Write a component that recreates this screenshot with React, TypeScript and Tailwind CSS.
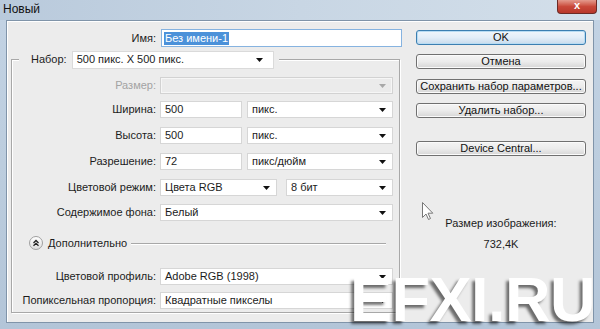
import React from "react";

function Arrow({ disabled }: { disabled?: boolean }) {
  return (
    <svg width="7" height="4" viewBox="0 0 7 4" className="shrink-0">
      <path d="M0 0H7L3.5 4Z" fill={disabled ? "#a8a8a8" : "#111"} />
    </svg>
  );
}

function Btn({ children, def }: { children: React.ReactNode; def?: boolean }) {
  return (
    <div
      className={
        def
          ? "h-[15px] w-[170px] rounded-[3px] border border-[#3c7fb1] bg-gradient-to-b from-[#f0f6fb] via-[#e3eef8] to-[#c8dbec] shadow-[inset_0_0_0_1px_#b8dcf3] flex items-center justify-center text-[11px] leading-none text-[#111]"
          : "h-[15px] w-[170px] rounded-[3px] border border-[#707070] bg-gradient-to-b from-[#f4f4f4] via-[#ececec] to-[#d6d6d6] shadow-[inset_0_0_0_1px_#fbfbfb] flex items-center justify-center text-[11px] leading-none text-[#111]"
      }
    >
      {children}
    </div>
  );
}

export default function App() {
  return (
    <div className="relative w-[600px] h-[329px] overflow-hidden font-['Liberation_Sans',Arial,sans-serif] text-[11px] text-[#1c1c1c] bg-gradient-to-b from-[#c3d3e4] via-[#bccdde] to-[#b3c5d8]">
      {/* title bar */}
      <div className="relative h-[20px] flex items-center pl-[3px] bg-gradient-to-r from-[#b9cadc] via-[#c8d6e4] to-[#d3dfea]">
        <span className="text-[12px] text-[#111] -mt-[3px]">Новый</span>
        <div className="absolute right-[3px] top-0 w-[40px] h-[14px] rounded-b-[4px] border border-t-0 border-[#6b2a25] bg-gradient-to-b from-[#e39a8d] via-[#c9493a] to-[#b8372a] flex items-center justify-center">
          <span className="text-white text-[11px] font-bold leading-none -mt-[2px]">x</span>
        </div>
      </div>
      {/* client */}
      <div className="mx-[6px] h-[303px] border border-[#8094a9] bg-[#ececec]">
        <div className="h-full border-t border-l border-white flex">
          {/* left column */}
          <div className="ml-[3px] w-[391px] flex flex-col">
            <div className="mt-[7px] h-[18px] flex items-center">
              <div className="w-[145px] text-right">Имя:</div>
              <div className="ml-[5px] w-[241px] h-[18px] border border-[#86b3e0] bg-white flex items-center pl-[2px]">
                <span className="bg-[#4b91d9] text-white px-[1px] leading-[13px]">Без имени-1</span>
              </div>
            </div>
            {/* group */}
            <div className="mt-[12px] w-[389px] h-[254px] border border-[#a8a8a8] shadow-[inset_1px_1px_0_#ffffff,1px_1px_0_#ffffff] flex flex-col">
              <div className="-mt-[10px] ml-[7px] self-start bg-[#ececec] pl-[12px] pr-[5px] h-[19px] flex items-center">
                <span>Набор:</span>
                <div className="ml-[5px] w-[202px] h-[18px] bg-white border border-[#dadada] flex items-center justify-between pl-[4px] pr-[10px]">
                  <span>500 пикс. X 500 пикс.</span>
                  <Arrow />
                </div>
              </div>
              <div className="mt-[8px] h-[17px] flex items-center">
                <div className="w-[144px] text-right text-[#a3a3a3]">Размер:</div>
                <div className="ml-[4px] w-[233px] h-[17px] bg-[#ebebeb] border border-[#d2d2d2] shadow-[inset_0_0_0_1px_#f6f6f6] flex items-center justify-end pr-[6px]">
                  <Arrow disabled />
                </div>
              </div>
              <div className="mt-[7px] h-[17px] flex items-center">
                <div className="w-[144px] text-right">Ширина:</div>
                <div className="ml-[4px] w-[82px] h-[17px] bg-white border border-[#d6d6d6] flex items-center pl-[4px]">500</div>
                <div className="ml-[5px] w-[146px] h-[17px] bg-white border border-[#d6d6d6] flex items-center justify-between pl-[4px] pr-[6px]">
                  <span>пикс.</span>
                  <Arrow />
                </div>
              </div>
              <div className="mt-[9px] h-[17px] flex items-center">
                <div className="w-[144px] text-right">Высота:</div>
                <div className="ml-[4px] w-[82px] h-[17px] bg-white border border-[#d6d6d6] flex items-center pl-[4px]">500</div>
                <div className="ml-[5px] w-[146px] h-[17px] bg-white border border-[#d6d6d6] flex items-center justify-between pl-[4px] pr-[6px]">
                  <span>пикс.</span>
                  <Arrow />
                </div>
              </div>
              <div className="mt-[9px] h-[17px] flex items-center">
                <div className="w-[144px] text-right">Разрешение:</div>
                <div className="ml-[4px] w-[82px] h-[17px] bg-white border border-[#d6d6d6] flex items-center pl-[4px]">72</div>
                <div className="ml-[5px] w-[146px] h-[17px] bg-white border border-[#d6d6d6] flex items-center justify-between pl-[4px] pr-[6px]">
                  <span>пикс/дюйм</span>
                  <Arrow />
                </div>
              </div>
              <div className="mt-[9px] h-[17px] flex items-center">
                <div className="w-[144px] text-right">Цветовой режим:</div>
                <div className="ml-[4px] w-[117px] h-[17px] bg-white border border-[#d6d6d6] flex items-center justify-between pl-[4px] pr-[6px]">
                  <span>Цвета RGB</span>
                  <Arrow />
                </div>
                <div className="ml-[9px] w-[107px] h-[17px] bg-white border border-[#d6d6d6] flex items-center justify-between pl-[4px] pr-[6px]">
                  <span>8 бит</span>
                  <Arrow />
                </div>
              </div>
              <div className="mt-[8px] h-[17px] flex items-center">
                <div className="w-[144px] text-right">Содержимое фона:</div>
                <div className="ml-[4px] w-[233px] h-[17px] bg-white border border-[#d6d6d6] flex items-center justify-between pl-[4px] pr-[6px]">
                  <span>Белый</span>
                  <Arrow />
                </div>
              </div>
              <div className="mt-[15px] h-[14px] flex items-center">
                <div className="ml-[17px] w-[14px] h-[14px] rounded-full border border-[#a0a0a0] bg-gradient-to-b from-white to-[#dedede] flex items-center justify-center">
                  <svg width="8" height="8" viewBox="0 0 8 8">
                    <path d="M1.5 4L4 1.5L6.5 4M1.5 6.8L4 4.3L6.5 6.8" fill="none" stroke="#222" strokeWidth="1.3" />
                  </svg>
                </div>
                <span className="ml-[5px]">Дополнительно</span>
                <div className="ml-[4px] mr-[13px] flex-1 h-px bg-[#a8a8a8] shadow-[0_1px_0_#ffffff]" />
              </div>
              <div className="mt-[18px] h-[17px] flex items-center">
                <div className="w-[144px] text-right">Цветовой профиль:</div>
                <div className="ml-[4px] w-[233px] h-[17px] bg-white border border-[#d6d6d6] flex items-center justify-between pl-[4px] pr-[6px]">
                  <span>Adobe RGB (1998)</span>
                  <Arrow />
                </div>
              </div>
              <div className="mt-[7px] h-[17px] flex items-center">
                <div className="w-[144px] text-right">Попиксельная пропорция:</div>
                <div className="ml-[4px] w-[233px] h-[17px] bg-white border border-[#d6d6d6] flex items-center justify-between pl-[4px] pr-[6px]">
                  <span>Квадратные пикселы</span>
                  <Arrow />
                </div>
              </div>
            </div>
          </div>
          {/* right column */}
          <div className="ml-[14px] w-[170px] flex flex-col">
            <div className="mt-[8px]"><Btn def>OK</Btn></div>
            <div className="mt-[9px]"><Btn>Отмена</Btn></div>
            <div className="mt-[10px]"><Btn>Сохранить набор параметров...</Btn></div>
            <div className="mt-[9px]"><Btn>Удалить набор...</Btn></div>
            <div className="mt-[23px]"><Btn>Device Central...</Btn></div>
            <div className="mt-[61px] text-center leading-[13px]">Размер изображения:</div>
            <div className="mt-[8px] text-center leading-[13px]">732,4K</div>
          </div>
        </div>
      </div>
      {/* cursor */}
      <svg className="absolute left-[422px] top-[202px]" width="12" height="19" viewBox="0 0 12 19">
        <path d="M0.5 0.5V15.5L4 12L6.5 17.5L8.5 16.5L6 11.2H10.8Z" fill="#fff" stroke="#777" strokeWidth="1" />
      </svg>
      {/* watermark */}
      <div className="absolute left-[350px] top-[268px] text-[63px] font-bold leading-none text-white tracking-[-0.5px] [text-shadow:-3px_3px_3px_rgba(0,0,0,0.55)] whitespace-nowrap">
        EFXI.RU
      </div>
    </div>
  );
}
